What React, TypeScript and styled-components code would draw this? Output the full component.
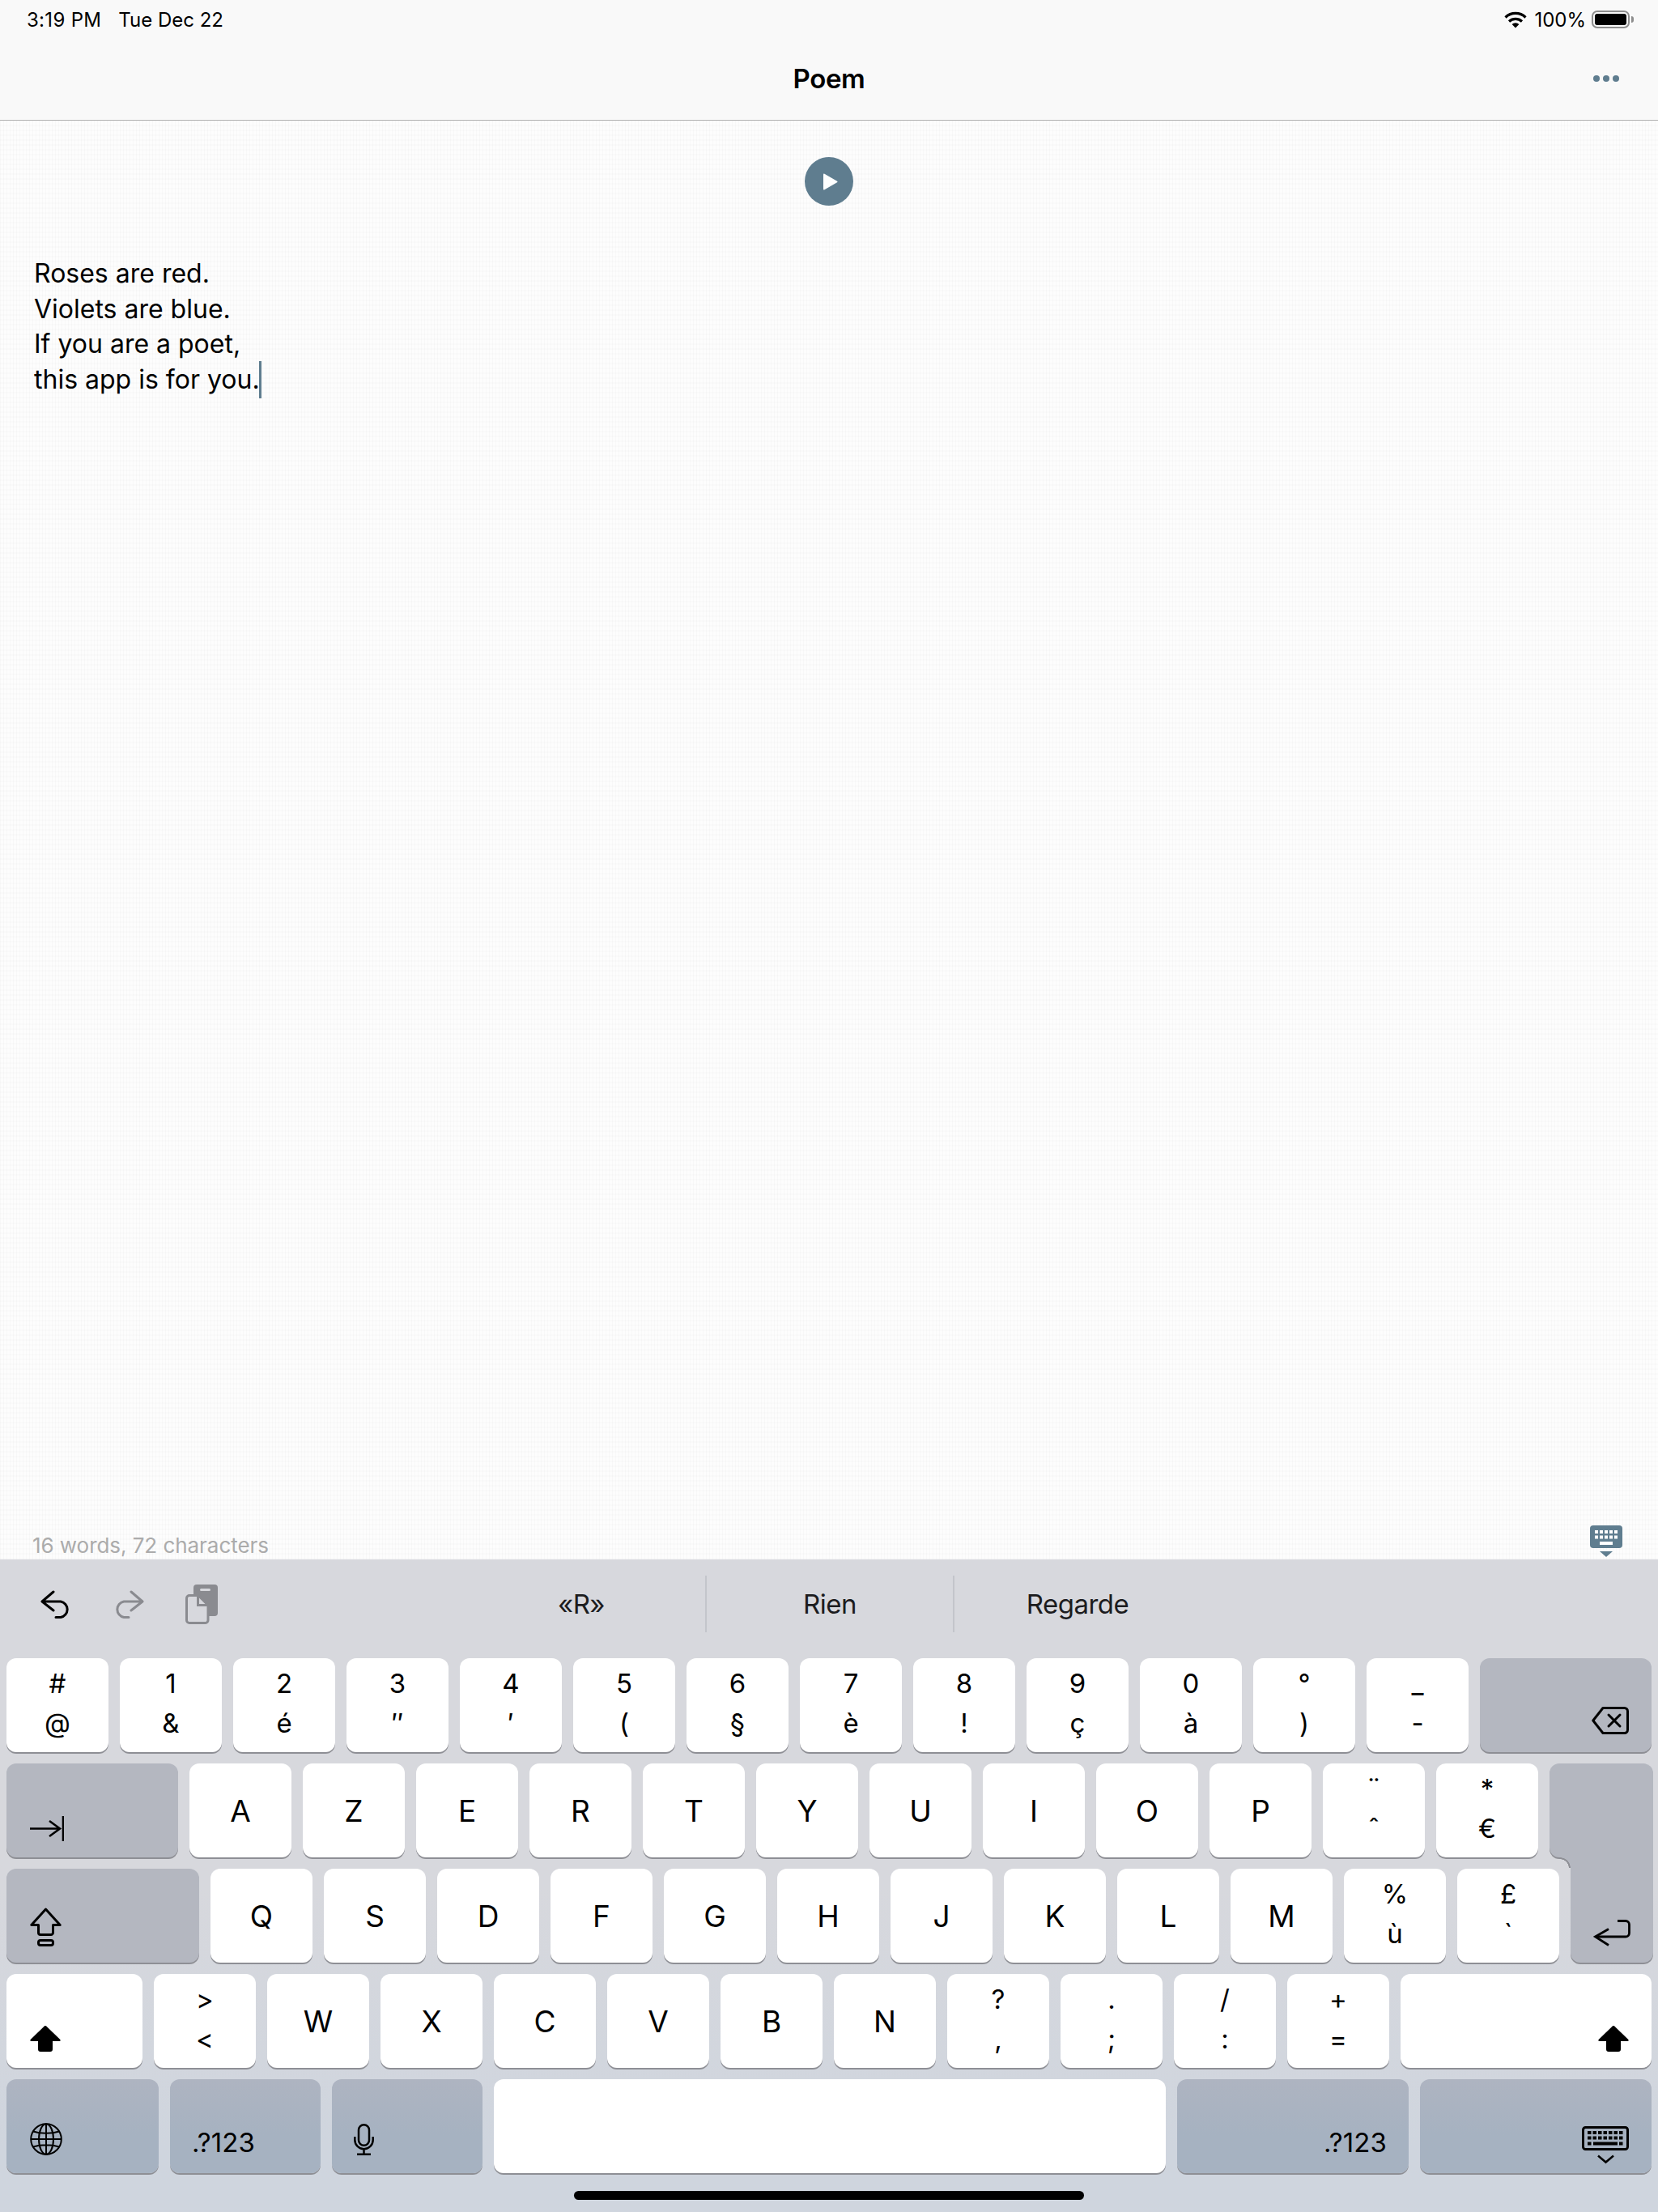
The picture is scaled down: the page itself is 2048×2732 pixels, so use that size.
import React from "react";
import styled, { createGlobalStyle } from "styled-components";

const Global = createGlobalStyle`
  html, body { margin: 0; padding: 0; background: #fcfcfc; }
  body { font-family: "Inter", "Liberation Sans", sans-serif; color: #000; }
`;

const ACCENT = "#5f7d8f";
const KEY_EDGE = "#8e8f95";

const Page = styled.div`
  width: 2048px;
  height: 2732px;
  display: flex;
  flex-direction: column;
  overflow: hidden;
`;

const Header = styled.header`
  height: 148px;
  flex: none;
  box-sizing: content-box;
  background: #f9f9f9;
  border-bottom: 1px solid #b2b2b2;
  display: flex;
  flex-direction: column;
`;

const StatusBar = styled.div`
  height: 48px;
  display: flex;
  align-items: center;
  padding: 0 35px 0 33px;
  font-size: 24px;
`;

const StatusTime = styled.span`
  margin-right: 21px;
  letter-spacing: 0.3px;
`;

const StatusRight = styled.div`
  margin-left: auto;
  display: flex;
  align-items: center;
`;

const Percent = styled.span`
  margin: 0 7px 0 9px;
`;

const Battery = styled.div`
  position: relative;
  width: 47px;
  height: 22px;
  box-sizing: border-box;
  border: 2px solid #8d8d8d;
  border-radius: 7px;
  padding: 2px;
  &::before {
    content: "";
    display: block;
    height: 100%;
    background: #000;
    border-radius: 3px;
  }
  &::after {
    content: "";
    position: absolute;
    right: -7px;
    top: 5px;
    width: 3px;
    height: 8px;
    background: #8d8d8d;
    border-radius: 0 3px 3px 0;
  }
`;

const NavBar = styled.div`
  flex: 1;
  position: relative;
  display: flex;
  align-items: center;
  justify-content: center;
  padding-bottom: 2px;
`;

const NavTitle = styled.h1`
  margin: 0;
  font-size: 33px;
  font-weight: 600;
  letter-spacing: -0.4px;
`;

const MoreDots = styled.div`
  position: absolute;
  right: 48px;
  top: 45px;
  display: flex;
  gap: 4px;
`;

const Dot = styled.span`
  width: 8px;
  height: 8px;
  border-radius: 50%;
  background: ${ACCENT};
`;

const Editor = styled.main`
  flex: 1;
  min-height: 0;
  display: flex;
  flex-direction: column;
  background-color: #fdfdfd;
  background-image:
    repeating-linear-gradient(90deg, rgba(0, 0, 0, 0.018) 0 1px, transparent 1px 4px),
    repeating-linear-gradient(0deg, rgba(0, 0, 0, 0.012) 0 2px, transparent 2px 6px);
`;

const PlayButton = styled.div`
  width: 60px;
  height: 60px;
  margin: 45px auto 0;
  border-radius: 50%;
  background: ${ACCENT};
  display: flex;
  align-items: center;
  justify-content: center;
  padding-left: 3px;
  box-sizing: border-box;
`;

const Poem = styled.div`
  margin: 62px 0 0 42px;
  font-size: 32px;
  line-height: 43.7px;
`;

const Caret = styled.span`
  display: inline-block;
  width: 3px;
  height: 46px;
  margin: -10px 0 -10px -1px;
  vertical-align: -2px;
  background: ${ACCENT};
`;

const EditorFooter = styled.div`
  margin-top: auto;
  display: flex;
  justify-content: space-between;
  align-items: flex-end;
  padding: 0 44px 3px 40px;
`;

const WordCount = styled.span`
  font-size: 26px;
  line-height: 28px;
  letter-spacing: -0.05px;
  color: #ababab;
`;

const Keyboard = styled.section`
  height: 806px;
  flex: none;
  background: linear-gradient(#d7d8dd 0, #d7d8dd 50%, #cfd5de 90%);
  position: relative;
`;

const SuggestionBar = styled.div`
  height: 110px;
  margin-bottom: 12px;
  display: grid;
  grid-template-columns: 565px 918px 1fr;
  align-items: center;
`;

const EditTools = styled.div`
  display: flex;
  align-items: center;
  padding-left: 50px;
  gap: 52px;
`;

const PasteIcon = styled.svg`
  margin-left: -1px;
`;

const Suggestions = styled.div`
  display: grid;
  grid-template-columns: repeat(3, 1fr);
`;

const Suggestion = styled.div`
  height: 70px;
  display: flex;
  align-items: center;
  justify-content: center;
  font-size: 33px;
  letter-spacing: -0.5px;
  color: #1c1c1e;
  & + & {
    border-left: 2px solid #c3c5cb;
  }
`;

const Rows = styled.div`
  display: flex;
  flex-direction: column;
  gap: 14px;
`;

const Row = styled.div`
  display: flex;
  gap: 14px;
  padding-left: 8px;
  height: 116px;
`;

const Key = styled.div<{ $w?: number; $right?: boolean; $pad?: number; $side?: number; $special?: boolean; $deep?: boolean }>`
  position: relative;
  flex: none;
  width: ${(p) => p.$w ?? 126}px;
  height: 116px;
  box-sizing: border-box;
  border-radius: 12px;
  box-shadow: 0 2px 0 ${KEY_EDGE};
  background: ${(p) =>
    p.$deep ? "linear-gradient(#aeb4c1, #a6b2c1 60%)" : p.$special ? "#b4b7c0" : "#fff"};
  display: flex;
  justify-content: ${(p) => (p.$right ? "flex-end" : "flex-start")};
  align-items: flex-end;
  padding: 0 ${(p) => (p.$right ? p.$side ?? 28 : 0)}px ${(p) => p.$pad ?? 20}px
    ${(p) => (p.$right ? 0 : p.$side ?? 29)}px;
`;

const LetterKey = styled(Key)`
  align-items: center;
  justify-content: center;
  padding: 0;
  font-size: 37px;
`;

const PairKey = styled(Key)`
  flex-direction: column;
  align-items: center;
  justify-content: flex-start;
  padding: 7px 0 0;
  font-size: 33px;
  line-height: 49px;
`;

const ReturnTop = styled(Key)`
  width: 128px;
  border-bottom-right-radius: 0;
`;

const ReturnBottom = styled(Key)`
  width: 102px;
  height: 130px;
  margin-top: -14px;
  border-radius: 0 0 12px 12px;
  &::before {
    content: "";
    position: absolute;
    left: -13px;
    top: 0;
    width: 13px;
    height: 13px;
    background: radial-gradient(circle at 0 100%, transparent 10.5px, ${KEY_EDGE} 11px, ${KEY_EDGE} 12.5px, #b4b7c0 13px);
  }
`;

const SpaceKey = styled(Key)`
  width: 830px;
`;

const TextLabel = styled.span`
  font-size: 33px;
  line-height: 28px;
  letter-spacing: 0.1px;
`;

const HomeIndicator = styled.div`
  position: absolute;
  left: 709px;
  top: 780px;
  width: 630px;
  height: 11px;
  border-radius: 6px;
  background: #000;
`;

const WifiIcon = () => (
  <svg width="28" height="21" viewBox="0 0 28 21" fill="none" stroke="#000" strokeWidth="3.2">
    <path d="M1.5 7.5a18 18 0 0 1 25 0M6 12.5a12 12 0 0 1 16 0" />
    <path d="M14 20.5 9.6 16a6.4 6.4 0 0 1 8.8 0Z" fill="#000" stroke="none" />
  </svg>
);

const PlayIcon = () => (
  <svg width="19" height="21" viewBox="0 0 19 21">
    <path d="M1 1.5v18a1 1 0 0 0 1.5.8l15.5-9a1 1 0 0 0 0-1.6L2.500.7A1 1 0 0 0 1 1.500Z" fill="#fff" />
  </svg>
);

const DismissIcon = () => (
  <svg width="40" height="39" viewBox="0 0 40 39">
    <rect width="40" height="28" rx="4" fill={ACCENT} />
    {[6, 12, 18, 24, 30].map((x) => (
      <rect key={x} x={x} y="6" width="4" height="4" fill="#fff" />
    ))}
    {[6, 12, 18, 24, 30].map((x) => (
      <rect key={x} x={x} y="12.500" width="4" height="4" fill="#fff" />
    ))}
    <rect x="12" y="20" width="16" height="4" fill="#fff" />
    <path d="M12 32h16l-8 7Z" fill={ACCENT} />
  </svg>
);

const UndoIcon = ({ color, flip }: { color: string; flip?: boolean }) => (
  <svg
    width="38"
    height="35"
    viewBox="0 0 38 35"
    fill="none"
    stroke={color}
    strokeWidth="3"
    strokeLinecap="round"
    strokeLinejoin="round"
    style={flip ? { transform: "scaleX(-1)" } : undefined}
  >
    <path d="M16 2 2 14l14 11M3 14h22a10.500 10 0 0 1 0 19.500h-6" />
  </svg>
);

const Paste = () => (
  <PasteIcon width="40" height="49" viewBox="0 0 40 49">
    <rect x="10" width="30" height="39" rx="4" fill="#8a8b90" />
    <rect x="18" y="5" width="13" height="3" rx="1.500" fill="#d7d8dd" />
    <path
      d="M5 13.500h11l12 12V44a3.500 3.500 0 0 1-3.500 3.500H5A3.500 3.500 0 0 1 1.500 44V17A3.500 3.500 0 0 1 5 13.500Z"
      fill="#d7d8dd"
      stroke="#8a8b90"
      strokeWidth="3"
    />
    <path d="M15.500 14v11.500H28" fill="none" stroke="#8a8b90" strokeWidth="3" />
  </PasteIcon>
);

const DeleteIcon = () => (
  <svg width="46" height="34" viewBox="0 0 46 34" fill="none" stroke="#000" strokeWidth="3" strokeLinejoin="round">
    <path d="M14 1.500h26.500a4 4 0 0 1 4 4v23a4 4 0 0 1-4 4H14L1.800 17Z" />
    <path d="m21 10 14 14M35 10 21 24" strokeLinecap="round" />
  </svg>
);

const TabIcon = () => (
  <svg width="42" height="31" viewBox="0 0 42 31" fill="none" stroke="#000" strokeWidth="2.600">
    <path d="M0 15.500h37M24 6l13 9.500L24 25" />
    <path d="M41 0v31" />
  </svg>
);

const CapsIcon = () => (
  <svg width="39" height="48" viewBox="0 0 39 48" fill="none" stroke="#000" strokeWidth="3" strokeLinejoin="round">
    <path d="M19.500 2 1.800 21.500H10.500V31a2.500 2.500 0 0 0 2.500 2.500h13a2.500 2.500 0 0 0 2.500-2.500V21.500h8.700Z" />
    <rect x="10.500" y="40.500" width="18" height="6" rx="2.500" />
  </svg>
);

const ShiftIcon = () => (
  <svg width="38" height="32" viewBox="0 0 38 32">
    <path d="M17.500.7a2 2 0 0 1 3 0l16.800 16.400c.7.800.2 1.900-.8 1.900H28v10a3 3 0 0 1-3 3H13a3 3 0 0 1-3-3V19H1.500c-1 0-1.500-1.100-.8-1.900Z" />
  </svg>
);

const ReturnIcon = () => (
  <svg width="46" height="33" viewBox="0 0 46 33" fill="none" stroke="#000" strokeWidth="2.800">
    <path d="M30 1.500h10a4.500 4.500 0 0 1 4.500 4.500v10.500a4.500 4.500 0 0 1-4.500 4.500H3" />
    <path d="M19 11.500 2.500 21 19 31.500" />
  </svg>
);

const GlobeIcon = () => (
  <svg width="40" height="40" viewBox="0 0 40 40" fill="none" stroke="#000" strokeWidth="2">
    <circle cx="20" cy="20" r="18.800" />
    <ellipse cx="20" cy="20" rx="9" ry="18.800" />
    <path d="M20 1v38M1.200 20h37.600M4 10.500c9 3 23 3 32 0M4 29.500c9-3 23-3 32 0" />
  </svg>
);

const MicIcon = () => (
  <svg width="25" height="39" viewBox="0 0 25 39" fill="none" stroke="#000" strokeWidth="2.500">
    <rect x="6" y="1.300" width="13" height="25.500" rx="6.500" />
    <path d="M1.300 16v4a11.200 11.200 0 0 0 22.400 0v-4M12.500 31.500V37.500M4 37.800h17" />
  </svg>
);

const KeyboardIcon = () => (
  <svg width="58" height="47" viewBox="0 0 58 47" fill="none">
    <rect x="1.500" y="1.500" width="55" height="27" rx="3" stroke="#000" strokeWidth="3" />
    {[0, 1].map((r) =>
      [7, 13.500, 20, 26.500, 33, 39.500, 46].map((x) => (
        <rect key={`${r}-${x}`} x={x} y={6 + r * 6.500} width="4.500" height="4" fill="#000" />
      ))
    )}
    <rect x="7" y="19.500" width="4.500" height="4" fill="#000" />
    <rect x="14" y="19.500" width="30" height="4" fill="#000" />
    <rect x="46" y="19.500" width="4.500" height="4" fill="#000" />
    <path d="m20 36.500 9.500 8 9.500-8" stroke="#000" strokeWidth="2.500" />
  </svg>
);

const Letters = ({ chars }: { chars: string }) => (
  <>
    {chars.split("").map((c) => (
      <LetterKey key={c}>{c}</LetterKey>
    ))}
  </>
);

const Pairs = ({ pairs }: { pairs: string[][] }) => (
  <>
    {pairs.map(([up, down]) => (
      <PairKey key={up + down}>
        <span>{up}</span>
        <span>{down}</span>
      </PairKey>
    ))}
  </>
);

export default function App() {
  return (
    <Page>
      <Global />
      <Header>
        <StatusBar>
          <StatusTime>3:19 PM</StatusTime>
          <span>Tue Dec 22</span>
          <StatusRight>
            <WifiIcon />
            <Percent>100%</Percent>
            <Battery />
          </StatusRight>
        </StatusBar>
        <NavBar>
          <NavTitle>Poem</NavTitle>
          <MoreDots>
            <Dot />
            <Dot />
            <Dot />
          </MoreDots>
        </NavBar>
      </Header>

      <Editor>
        <PlayButton>
          <PlayIcon />
        </PlayButton>
        <Poem>
          Roses are red.
          <br />
          Violets are blue.
          <br />
          If you are a poet,
          <br />
          this app is for you.
          <Caret />
        </Poem>
        <EditorFooter>
          <WordCount>16 words, 72 characters</WordCount>
          <DismissIcon />
        </EditorFooter>
      </Editor>

      <Keyboard>
        <SuggestionBar>
          <EditTools>
            <UndoIcon color="#000" />
            <UndoIcon color="#8a8b90" flip />
            <Paste />
          </EditTools>
          <Suggestions>
            <Suggestion>«R»</Suggestion>
            <Suggestion>Rien</Suggestion>
            <Suggestion>Regarde</Suggestion>
          </Suggestions>
        </SuggestionBar>
        <Rows>
          <Row>
            <Pairs
              pairs={[
                ["#", "@"],
                ["1", "&"],
                ["2", "é"],
                ["3", "″"],
                ["4", "′"],
                ["5", "("],
                ["6", "§"],
                ["7", "è"],
                ["8", "!"],
                ["9", "ç"],
                ["0", "à"],
                ["°", ")"],
                ["_", "-"],
              ]}
            />
            <Key $special $right $w={212} $pad={22}>
              <DeleteIcon />
            </Key>
          </Row>
          <Row>
            <Key $special $w={212} $pad={20}>
              <TabIcon />
            </Key>
            <Letters chars="AZERTYUIOP" />
            <Pairs
              pairs={[
                ["¨", "ˆ"],
                ["*", "€"],
              ]}
            />
            <ReturnTop $special />
          </Row>
          <Row>
            <Key $special $w={238}>
              <CapsIcon />
            </Key>
            <Letters chars="QSDFGHJKLM" />
            <Pairs
              pairs={[
                ["%", "ù"],
                ["£", "`"],
              ]}
            />
            <ReturnBottom $special $right>
              <ReturnIcon />
            </ReturnBottom>
          </Row>
          <Row>
            <Key $w={168}>
              <ShiftIcon />
            </Key>
            <Pairs pairs={[[">", "<"]]} />
            <Letters chars="WXCVBN" />
            <Pairs
              pairs={[
                ["?", ","],
                [".", ";"],
                ["/", ":"],
                ["+", "="],
              ]}
            />
            <Key $w={310} $right>
              <ShiftIcon />
            </Key>
          </Row>
          <Row>
            <Key $deep $w={188} $pad={22}>
              <GlobeIcon />
            </Key>
            <Key $deep $w={186} $pad={24} $side={27}>
              <TextLabel>.?123</TextLabel>
            </Key>
            <Key $deep $w={186} $pad={22} $side={27}>
              <MicIcon />
            </Key>
            <SpaceKey />
            <Key $deep $w={286} $right $pad={24} $side={27}>
              <TextLabel>.?123</TextLabel>
            </Key>
            <Key $deep $w={286} $right $pad={11}>
              <KeyboardIcon />
            </Key>
          </Row>
        </Rows>
        <HomeIndicator />
      </Keyboard>
    </Page>
  );
}
